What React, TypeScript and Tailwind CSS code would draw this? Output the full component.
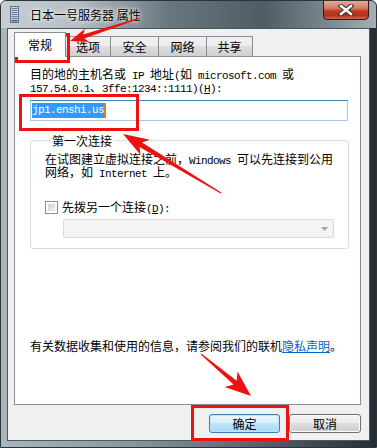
import React from 'react'

// latin runs: SimSun-like half width cells (6px)
const L = ({ children }: { children: React.ReactNode }) => (
  <span className="font-['Liberation_Mono',monospace] text-[11px] leading-none tracking-[-0.6px] whitespace-pre">{children}</span>
)

type Pt = [number, number]

function arrowPoints(tail: Pt, tip: Pt, headLen: number, headW: number, shaftW: number) {
  const dx = tip[0] - tail[0]
  const dy = tip[1] - tail[1]
  const len = Math.hypot(dx, dy)
  const ux = dx / len
  const uy = dy / len
  const px = -uy
  const py = ux
  const bx = tip[0] - ux * headLen
  const by = tip[1] - uy * headLen
  const nx = tip[0] - ux * headLen * 0.8
  const ny = tip[1] - uy * headLen * 0.8
  const pts: Pt[] = [
    [tail[0] + px * 0.5, tail[1] + py * 0.5],
    [nx + px * shaftW, ny + py * shaftW],
    [bx + px * headW, by + py * headW],
    tip,
    [bx - px * headW, by - py * headW],
    [nx - px * shaftW, ny - py * shaftW],
    [tail[0] - px * 0.5, tail[1] - py * 0.5],
  ]
  return pts.map(p => `${p[0].toFixed(1)},${p[1].toFixed(1)}`).join(' ')
}

function Tab({ label, w, active }: { label: string; w: string; active?: boolean }) {
  if (active) {
    return (
      <div className={`${w} relative z-10 -mb-px h-[25px] bg-white border border-b-0 border-[#898c95] flex items-center justify-center pb-[1px]`}>
        {label}
      </div>
    )
  }
  return (
    <div className={`${w} -ml-px h-[20px] border border-b-0 border-[#898c95] bg-[linear-gradient(#f2f2f2,#ebebeb_50%,#dddddd_50%,#cfcfcf)] flex items-center justify-center`}>
      {label}
    </div>
  )
}

export default function App() {
  return (
    <div className="relative w-[377px] h-[448px] overflow-hidden rounded-t-[6px] border border-[#2b3439] bg-[linear-gradient(90deg,#aab6bc,#8896a0_35%,#4d5960_75%,#262e33)] font-['Noto_Sans_CJK_SC',sans-serif] text-[12px] leading-[13px] text-black">
      {/* title bar */}
      <div className="h-[27px] flex items-start bg-[linear-gradient(90deg,#c6ced2_0%,#b4bec4_20%,#68767f_45%,#4f5c64_70%,#7d8a92_88%,#a5b0b6_100%)]">
        <svg width="9" height="17" viewBox="0 0 9 17" className="ml-[9px] mt-[5px]">
          <rect x="0.5" y="0.5" width="8" height="16" fill="#c9d6e2" stroke="#5d7590" />
          {[2, 4, 6, 8, 10, 12].map(y => (
            <rect key={y} x="1.5" y={y} width="6" height="1" fill="#5e7896" />
          ))}
          <rect x="1.5" y="14" width="6" height="1.5" fill="#3f5b7a" />
        </svg>
        <div className="ml-[11px] mt-[7px] text-[12px] leading-[14px] text-black [text-shadow:0_0_6px_#ffffff,0_0_3px_#ffffff]">日本一号服务器 属性</div>
        <div className="ml-auto mr-[7px] mt-[-1px] w-[46px] h-[20px] rounded-b-[4px] border border-[#3b1610] bg-[linear-gradient(#e9a898,#d47b66_40%,#c13b22_55%,#b4301a_80%,#d06a4a)] flex items-center justify-center">
          <svg width="16" height="12" viewBox="0 0 16 12">
            <path d="M3 2 L13 10 M13 2 L3 10" stroke="#3a2a28" strokeWidth="4.6" strokeLinecap="square" />
            <path d="M3 2 L13 10 M13 2 L3 10" stroke="#ffffff" strokeWidth="2.6" strokeLinecap="square" />
          </svg>
        </div>
      </div>

      {/* client area */}
      <div className="ml-[6px] w-[363px] h-[413px] border border-[#4b5961] bg-[#f0f0f0] pt-[3px]">
        <div className="ml-[6px] h-[24px] flex items-end">
          <Tab label="常规" w="w-[52px]" active />
          <Tab label="选项" w="w-[46px]" />
          <Tab label="安全" w="w-[49px]" />
          <Tab label="网络" w="w-[49px]" />
          <Tab label="共享" w="w-[47px]" />
        </div>

        <div className="ml-[6px] w-[347px] h-[349px] bg-white border border-[#898c95] flex flex-col pl-[15px] pt-[10px]">
          <div className="h-[13px] whitespace-pre">目的地的主机名或<L> IP </L>地址<L>(</L>如<L> microsoft.com </L>或</div>
          <div className="h-[13px] whitespace-pre"><L>157.54.0.1</L>、<L>3ffe:1234::1111)(<span className="underline">H</span>):</L></div>

          <div className="mt-[7px] w-[318px] h-[21px] border border-[#a9cbe6] border-t-[#3c7fb1] flex items-center pl-[1px]">
            <span className="bg-[#3399ff] text-white h-[15px] flex items-center"><L>jp1.enshi.us</L></span>
            <span className="w-[2px] h-[15px] bg-[#e07a2a]" />
          </div>

          <fieldset className="mt-[13px] w-[319px] h-[115px] border border-[#d5dfe5] rounded-[3px] pl-[14px] pr-[10px]">
            <legend className="ml-[5px] px-[2px] h-[13px] leading-[13px]">第一次连接</legend>
            <div className="mt-[5px] h-[13px] whitespace-pre">在试图建立虚拟连接之前，<L>Windows </L>可以先连接到公用</div>
            <div className="h-[13px] whitespace-pre">网络，如<L> Internet </L>上。</div>
            <div className="mt-[23px] h-[13px] flex items-center">
              <div className="w-[13px] h-[13px] border border-[#8e8f8f] bg-white p-[2px]">
                <div className="w-full h-full bg-[linear-gradient(135deg,#cbcfd5,#f6f6f6)] border border-[#dcdcdc]" />
              </div>
              <span className="ml-[4px] whitespace-pre">先拨另一个连接<L>(<span className="underline">D</span>):</L></span>
            </div>
            <div className="mt-[5px] ml-[18px] w-[271px] h-[19px] rounded-[2px] border border-[#d9d9d9] bg-[#f4f4f4] flex items-center justify-end pr-[5px]">
              <svg width="7" height="4" viewBox="0 0 7 4">
                <path d="M0 0 L7 0 L3.5 4 Z" fill="#a3a3a3" />
              </svg>
            </div>
          </fieldset>

          <div className="mt-auto mb-[52px] h-[13px] whitespace-pre">
            有关数据收集和使用的信息，请参阅我们的联机<span className="text-[#0066cc] underline">隐私声明</span>。
          </div>
        </div>

        <div className="mt-[9px] pr-[8px] flex justify-end gap-[9px]">
          <div className="w-[71px] h-[19px] rounded-[3px] border border-[#3c7fb1] bg-[linear-gradient(#eaf6fd,#d9f0fc_50%,#bee6fd_50%,#a7d9f5)] shadow-[inset_0_0_0_1px_#c0e4f8] flex items-center justify-center">确定</div>
          <div className="w-[72px] h-[19px] rounded-[3px] border border-[#707070] bg-[linear-gradient(#f2f2f2,#ebebeb_50%,#dddddd_50%,#cfcfcf)] shadow-[inset_0_0_0_1px_#fbfbfb] flex items-center justify-center">取消</div>
        </div>
      </div>

      {/* annotations */}
      <svg className="absolute left-0 top-0 pointer-events-none" width="377" height="448" viewBox="-1 -1 377 448">
        <rect x="14.5" y="32.5" width="52" height="27" fill="none" stroke="#ee1111" strokeWidth="3" />
        <rect x="18.5" y="93.5" width="117" height="34" fill="none" stroke="#ee1111" strokeWidth="3" />
        <rect x="190.5" y="404.5" width="95" height="33" fill="none" stroke="#ee1111" strokeWidth="3" />
        <polygon points={arrowPoints([138, 16], [68, 39], 18, 7, 2)} fill="#ee1111" />
        <polygon points={arrowPoints([219, 191], [121, 132], 26, 9, 2.5)} fill="#ee1111" />
        <polygon points={arrowPoints([199, 352], [249, 394], 26, 10, 2.5)} fill="#ee1111" />
      </svg>
    </div>
  )
}
